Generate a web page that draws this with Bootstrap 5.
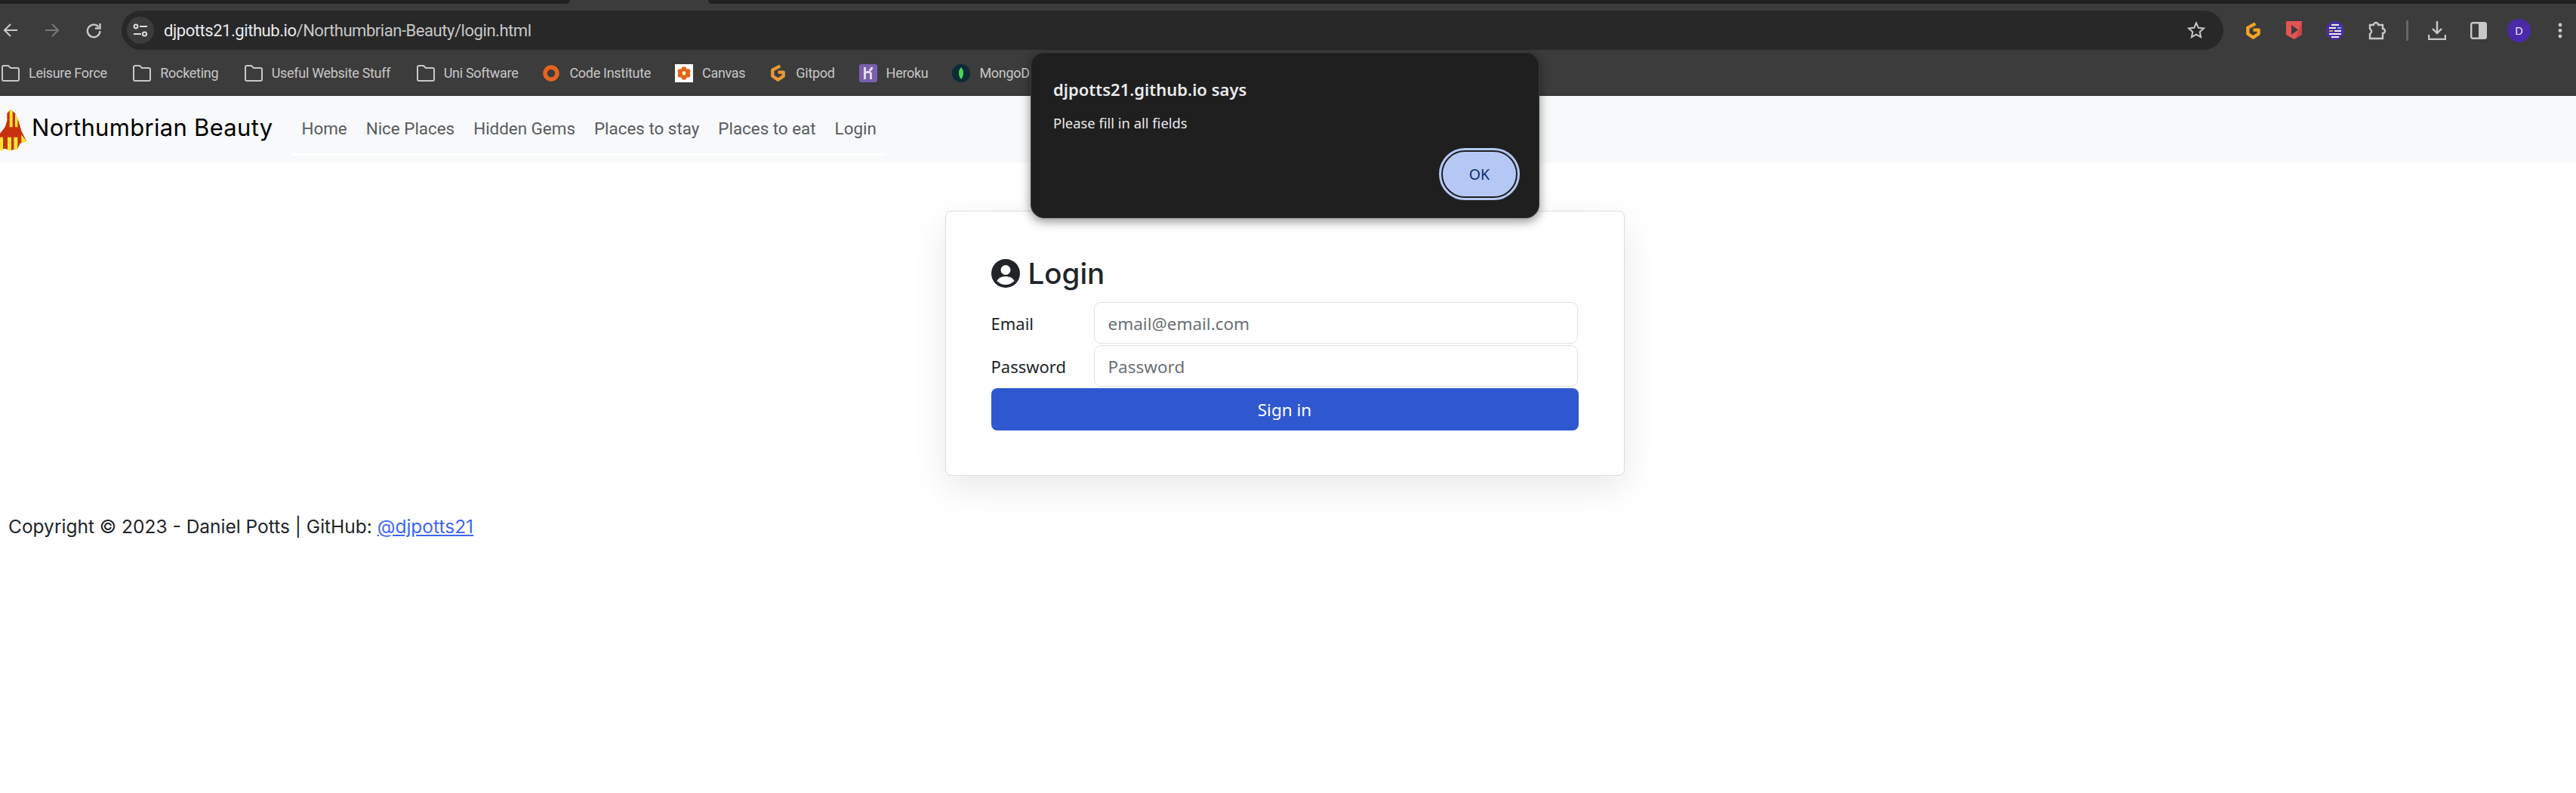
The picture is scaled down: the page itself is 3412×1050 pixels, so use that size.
<!DOCTYPE html>
<html lang="en">
<head>
<meta charset="utf-8">
<title>Login</title>
<link href="https://cdn.jsdelivr.net/npm/bootstrap@5.3.0/dist/css/bootstrap.min.css" rel="stylesheet">
<style>
  body { font-family: "Noto Sans", "Open Sans", sans-serif; background: #fff; height: 1050px; overflow: hidden; position: relative; }

  /* browser frame */
  .tab-strip { height: 5px; background: #3c3c3c; }
  .tab-left { width: 755px; background: #202221; border-bottom-right-radius: 5px; }
  .tab-right { background: #202221; border-bottom-left-radius: 5px; margin-left: 183px; }
  .tool-row { height: 61px; background: #3c3c3c; padding-top: 9px; }
  .nav-arrow { width: 22px; height: 22px; color: #c8c8c8; }
  .nav-arrow.dim { color: #777; }
  .back-group { width: 161px; height: 52px; padding-left: 3px; gap: 33px; }
  .url-bar { width: 2784px; height: 52px; background: #282828; border-radius: 26px; color: #c7c7c7; font: 22px "Roboto", sans-serif; letter-spacing: -.45px; padding: 0 24px 0 7px; }
  .url-bar b { font-weight: 400; color: #e8eaed; }
  .site-chip { width: 36px; height: 36px; border-radius: 50%; background: #3c3c3c; margin-right: 13px; }
  .ext-row { width: 467px; height: 52px; padding-left: 28px; gap: 32px; }
  .ext-sep { width: 3px; height: 27px; background: #666; margin: 0 -6px; }
  .ext-avatar { width: 31px; height: 31px; border-radius: 50%; background: #4a2aa8; color: #e8e8e8; font-size: 15px; margin-left: -5px; }
  .ext-dots { margin-left: 4px; }
  .bookmark-row { height: 61px; background: #3c3c3c; border-bottom: 2px solid #363636; color: #c7c7c7; font: 18px "Roboto", sans-serif; letter-spacing: -.3px; padding: 2px 0 0 2px; gap: 32px; white-space: nowrap; overflow: hidden; }
  .bookmark-row span { gap: 12px; }
  .bookmark-row .folder-mark { margin-right: 2.500px; }

  /* site navbar */
  .site-bar { height: 89px; background: #f8f9fa; }
  .brand-logo { margin-top: 2px; }
  .brand-name { font: 400 31px "Inter", sans-serif; color: #000; letter-spacing: .3px; margin: 0 0 6px 7px; }
  .site-links { height: 79px; margin-left: 26px; border-bottom: 3px solid #fff; padding: 10px 12px 0; gap: 25px; font: 22.4px "Roboto", sans-serif; color: #5a5c5f; }
  .site-links a { color: #5a5c5f; text-decoration: none; }

  /* login card */
  .login-wrap { width: 3403px; padding-top: 63px; }
  .login-card { width: 900px; height: 351px; padding: 62px 60px 0; border-color: #dcdcdc; box-shadow: 0 16px 48px rgba(0,0,0,.09); border-radius: 8px; }
  .login-title { font: 500 38.5px "Inter", sans-serif; color: #212529; gap: 11px; height: 40px; margin-bottom: 18px; }
  .field-row { height: 55px; margin-bottom: 2px; }
  .field-row label { width: 136px; font-size: 22px; color: #212529; padding-top: 2px; }
  .field-row .form-control { height: 55px; width: 641px; font-size: 22.5px; padding: 2px 18px 0; border: 1.5px solid #dee2e6; border-radius: 9px; }
  .field-row .form-control::placeholder { color: #6b7075; }
  .signin-btn { width: 778px; height: 56px; background: #2f58d0; border: 0; border-radius: 8px; font-size: 22.5px; color: #fff; padding-top: 8px; }

  .copy-line { margin: 52px 0 0 11px; font: 400 24.5px "Inter", sans-serif; color: #212529; }
  .copy-line a { color: #3e67f0; }

  /* alert dialog */
  .js-dialog { position: absolute; left: 1365px; top: 69px; width: 674px; height: 220px; background: #1f1f1f; border: 1px solid #3a3a3a; border-radius: 18px; box-shadow: 0 4px 14px rgba(0,0,0,.45); padding: 33px 22px 0 29px; color: #e8eaed; }
  .js-dialog h6 { font: 600 22px "Noto Sans", sans-serif; margin: 0 0 16px; }
  .js-dialog p { font-size: 18.4px; margin: 0; }
  .ok-btn { position: absolute; right: 27px; bottom: 25px; width: 103px; height: 65px; border-radius: 33px; background: #b5c8f5; border: 3px solid #1f1f1f; outline: 3px solid #b5c8f5; outline-offset: -1px; color: #0a2a6e; font-size: 19.5px; padding: 0; }
</style>
</head>
<body>

<div class="tab-strip d-flex">
  <div class="tab-left"></div>
  <div class="tab-right flex-grow-1"></div>
</div>

<div class="tool-row d-flex align-items-start">
  <div class="back-group d-flex align-items-center">
    <svg class="nav-arrow" viewBox="0 0 22 22" fill="none" stroke="currentColor" stroke-width="2.2"><path d="M20 11H3.500M11 3l-8 8 8 8"/></svg>
    <svg class="nav-arrow dim" viewBox="0 0 22 22" fill="none" stroke="currentColor" stroke-width="2.2"><path d="M2 11h16.500M11 3l8 8-8 8"/></svg>
    <svg class="nav-arrow" viewBox="0 0 22 22" fill="none" stroke="currentColor" stroke-width="2.4"><path d="M17.500 6.500a8.300 8.300 0 1 0 2 5.500"/><path d="M19.500 2v6.500H13" /></svg>
  </div>
  <div class="url-bar d-flex align-items-center">
    <span class="site-chip d-flex align-items-center justify-content-center">
      <svg width="20" height="20" viewBox="0 0 20 20" fill="none" stroke="#ddd" stroke-width="2"><circle cx="4" cy="5" r="2.400"/><path d="M9 5h10M1 15h10"/><circle cx="15.500" cy="15" r="2.600"/></svg>
    </span>
    <span><b>djpotts21.github.io</b>/Northumbrian-Beauty/login.html</span>
    <svg class="ms-auto" width="24" height="24" viewBox="0 0 24 24" fill="none" stroke="#c8c8c8" stroke-width="2"><path d="M12 2.500l2.900 6.300 6.900.8-5.100 4.700 1.400 6.800-6.100-3.400-6.100 3.400 1.400-6.800-5.100-4.700 6.900-.8z"/></svg>
  </div>
  <div class="ext-row d-flex align-items-center">
    <svg width="23" height="25" viewBox="0 0 24 26" fill="none" stroke="#f2a427" stroke-width="4.500" stroke-linejoin="round"><path d="M15 3.500L4.500 9v8.500L12 22.500l7.500-5V12H12"/></svg>
    <svg width="21" height="24" viewBox="0 0 21 24"><path d="M0 0h21v18l-10.500 6L0 18z" fill="#e25555"/><path d="M21 0v18l-10.500 6 4-5z" fill="#c94646"/><path d="M7 5l9 6.500L7 18z" fill="#3c3c3c"/></svg>
    <svg width="24" height="25" viewBox="0 0 24 25"><ellipse cx="12" cy="12.500" rx="12" ry="12.500" fill="#4a2fa0"/><path d="M7 5h10M4 9h9M11 13h9M4 17h16M7 21h10" stroke="#eee" stroke-width="1.800"/><path d="M15 9h5" stroke="#6ec6e8" stroke-width="1.800"/><path d="M4 13h5" stroke="#e8b23a" stroke-width="1.800"/></svg>
    <svg width="24" height="25" viewBox="0 0 24 25" fill="none" stroke="#c8c8c8" stroke-width="2.400"><path d="M2 5h5a3 3 0 0 1 6 0h6v5a2.800 2.800 0 0 1 0 6v7H2v-6a4 4 0 0 0 0-7z"/></svg>
    <span class="ext-sep"></span>
    <svg width="24" height="25" viewBox="0 0 24 25" fill="none" stroke="#c8c8c8" stroke-width="2.400"><path d="M12 0v16M6 10l6 6 6-6M1 18v6h22v-6"/></svg>
    <svg width="22" height="23" viewBox="0 0 22 23"><rect x="1.200" y="1.200" width="19.600" height="20.600" rx="2" fill="none" stroke="#c8c8c8" stroke-width="2.400"/><rect x="11" y="1" width="10" height="21" fill="#c8c8c8"/></svg>
    <span class="ext-avatar d-flex align-items-center justify-content-center">D</span>
    <svg class="ext-dots" width="6" height="21" viewBox="0 0 6 21" fill="#c8c8c8"><circle cx="3" cy="3" r="2.400"/><circle cx="3" cy="10.500" r="2.400"/><circle cx="3" cy="18" r="2.400"/></svg>
  </div>
</div>

<div class="bookmark-row d-flex align-items-center">
  <span class="folder-mark d-flex align-items-center"><svg width="24" height="22" viewBox="0 0 24 22" fill="none" stroke="#c8c8c8" stroke-width="2"><path d="M1 3a2 2 0 0 1 2-2h6l3 3h9a2 2 0 0 1 2 2v13a2 2 0 0 1-2 2H3a2 2 0 0 1-2-2z"/></svg>Leisure Force</span>
  <span class="folder-mark d-flex align-items-center"><svg width="24" height="22" viewBox="0 0 24 22" fill="none" stroke="#c8c8c8" stroke-width="2"><path d="M1 3a2 2 0 0 1 2-2h6l3 3h9a2 2 0 0 1 2 2v13a2 2 0 0 1-2 2H3a2 2 0 0 1-2-2z"/></svg>Rocketing</span>
  <span class="folder-mark d-flex align-items-center"><svg width="24" height="22" viewBox="0 0 24 22" fill="none" stroke="#c8c8c8" stroke-width="2"><path d="M1 3a2 2 0 0 1 2-2h6l3 3h9a2 2 0 0 1 2 2v13a2 2 0 0 1-2 2H3a2 2 0 0 1-2-2z"/></svg>Useful Website Stuff</span>
  <span class="d-flex align-items-center"><svg width="24" height="22" viewBox="0 0 24 22" fill="none" stroke="#c8c8c8" stroke-width="2"><path d="M1 3a2 2 0 0 1 2-2h6l3 3h9a2 2 0 0 1 2 2v13a2 2 0 0 1-2 2H3a2 2 0 0 1-2-2z"/></svg>Uni Software</span>
  <span class="d-flex align-items-center"><svg width="24" height="24" viewBox="0 0 24 24" fill="none" stroke="#e8641e" stroke-width="5.500"><circle cx="12" cy="12" r="8"/></svg>Code Institute</span>
  <span class="d-flex align-items-center"><svg width="24" height="24" viewBox="0 0 24 24"><rect width="24" height="24" fill="#fff"/><g fill="#e0641a"><circle cx="12" cy="6.500" r="3.300"/><circle cx="12" cy="17.500" r="3.300"/><circle cx="7" cy="9.500" r="3.300"/><circle cx="17" cy="9.500" r="3.300"/><circle cx="7" cy="14.500" r="3.300"/><circle cx="17" cy="14.500" r="3.300"/></g><circle cx="12" cy="12" r="2.200" fill="#fff3b0"/></svg>Canvas</span>
  <span class="d-flex align-items-center"><svg width="23" height="25" viewBox="0 0 24 26" fill="none" stroke="#e8983a" stroke-width="4.500" stroke-linejoin="round"><path d="M15 3.500L4.500 9v8.500L12 22.500l7.500-5V12H12"/></svg>Gitpod</span>
  <span class="d-flex align-items-center"><svg width="24" height="24" viewBox="0 0 24 24"><rect width="24" height="24" rx="3" fill="#7a5fae"/><path d="M7.500 4v16M7.500 11.500c3-1.500 8-2 8 1.500v7M17 4c-.3 2.500-1.500 3.500-3.500 4.500" fill="none" stroke="#e8e0f5" stroke-width="2.800"/></svg>Heroku</span>
  <span class="d-flex align-items-center"><svg width="24" height="24" viewBox="0 0 24 24"><circle cx="12" cy="12" r="12" fill="#0c2b36"/><path d="M12 4c4 4 4 11 0 16-4-5-4-12 0-16z" fill="#4fd05a"/></svg>MongoDB</span>
</div>

<nav class="site-bar d-flex align-items-start">
  <svg class="brand-logo flex-shrink-0 align-self-center" width="35" height="55" viewBox="0 0 105 165">
    <path d="M42 0l18 15 15 35 10 35 20 40-25 10-10 20-30 8-20-8-20 5V95l20-25 8-25V15z" fill="#c8300f"/>
    <path d="M42 0l8 7v63H38V5zM60 15l10 23 0 32H60zM0 110h12v53H0zM30 110h15v53H30zM55 110h15v48H55zM85 100l20 25-20 10z" fill="#f6e62c"/>
  </svg>
  <span class="brand-name align-self-center">Northumbrian Beauty</span>
  <div class="site-links d-flex align-items-center">
    <a href="#">Home</a>
    <a href="#">Nice Places</a>
    <a href="#">Hidden Gems</a>
    <a href="#">Places to stay</a>
    <a href="#">Places to eat</a>
    <a href="#">Login</a>
  </div>
</nav>

<div class="login-wrap">
  <div class="card login-card mx-auto">
    <div class="login-title d-flex align-items-center">
      <svg width="38" height="38" viewBox="0 0 38 38"><circle cx="19" cy="19" r="19" fill="#212529"/><circle cx="19" cy="14.500" r="6.500" fill="#fff"/><path d="M7.500 29c2-4 6-6 11.500-6s9.500 2 11.500 6c-3 3-7 5-11.500 5s-8.500-2-11.500-5z" fill="#fff"/></svg>
      Login
    </div>
    <div class="field-row d-flex align-items-center">
      <label for="loginEmail">Email</label>
      <input id="loginEmail" class="form-control" type="email" placeholder="email@email.com">
    </div>
    <div class="field-row d-flex align-items-center">
      <label for="loginPass">Password</label>
      <input id="loginPass" class="form-control" type="password" placeholder="Password">
    </div>
    <button type="button" class="btn signin-btn">Sign in</button>
  </div>
</div>

<p class="copy-line">Copyright © 2023 - Daniel Potts | GitHub: <a href="#">@djpotts21</a></p>

<div class="js-dialog">
  <h6>djpotts21.github.io says</h6>
  <p>Please fill in all fields</p>
  <button type="button" class="btn ok-btn">OK</button>
</div>

<script src="https://cdn.jsdelivr.net/npm/bootstrap@5.3.0/dist/js/bootstrap.bundle.min.js"></script>
</body>
</html>
